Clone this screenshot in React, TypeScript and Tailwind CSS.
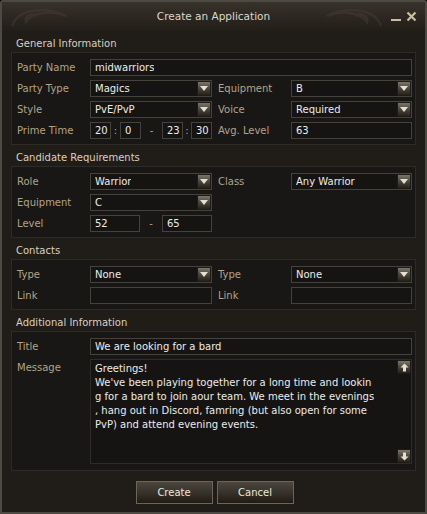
/**
 * Create an Application window
 * Game-style party recruitment form
 */

import type { ReactNode } from 'react';

const FONT = { fontFamily: '"DejaVu Sans", Verdana, sans-serif' };

function Label({ children, className = '' }: { children: ReactNode; className?: string }) {
  return (
    <div className={`flex h-[17px] items-center text-[10px] text-[#b3a386] ${className}`}>
      {children}
    </div>
  );
}

function Field({
  value = '',
  dropdown = false,
  className = '',
}: {
  value?: string;
  dropdown?: boolean;
  className?: string;
}) {
  return (
    <div
      className={`relative flex h-[17px] items-center border border-[#45423c] bg-[#151413] pl-[4px] text-[10px] text-[#ececea] ${className}`}
    >
      <span className="truncate">{value}</span>
      {dropdown && (
        <div className="absolute right-[0px] top-[0px] flex h-[15px] w-[14px] items-center justify-center border border-[#1e1b16] bg-gradient-to-b from-[#7a766c] via-[#4a463d] to-[#262219]">
          <svg width="8" height="5" viewBox="0 0 8 5">
            <path d="M0 0 H8 L4 5 Z" fill="#e4dfd2" />
          </svg>
        </div>
      )}
    </div>
  );
}

function ScrollButton({ up }: { up: boolean }) {
  return (
    <div className="flex h-[14px] w-[14px] items-center justify-center border border-[#1e1b16] bg-gradient-to-b from-[#7a766c] via-[#4a463d] to-[#262219]">
      <svg width="9" height="9" viewBox="0 0 9 9" className={up ? '' : 'rotate-180'}>
        <path d="M4.5 0.5 L8.5 4.5 H6 V8.5 H3 V4.5 H0.5 Z" fill="#e4dfd2" />
      </svg>
    </div>
  );
}

function Section({ title, children }: { title: string; children: ReactNode }) {
  return (
    <div>
      <div className="flex h-[21px] items-center pl-[5px] pt-[3px] text-[10px] text-[#d8d1c2]">
        {title}
      </div>
      <div className="border border-[#2e2b26] bg-[#181716] pb-[5px] pl-[5px] pr-[6px] pt-[6px]">
        {children}
      </div>
    </div>
  );
}

// grid: label col 73px, field 122px, gap, label 73, field 121
const row = 'grid grid-cols-[73px_122px_6px_73px_121px]';

const messageLines = [
  'Greetings!',
  "We've been playing together for a long time and lookin",
  'g for a bard to join aour team. We meet in the evenings',
  ', hang out in Discord, famring (but also open for some',
  'PvP) and attend evening events.',
];

export default function App() {
  return (
    <div className="h-[514px] w-[427px] bg-black" style={FONT}>
      <div className="relative flex h-full w-full flex-col rounded-t-[3px] border-2 border-[#4d4a44] bg-[#201c17]">
        {/* Title bar */}
        <div className="relative flex h-[29px] items-center justify-center bg-gradient-to-b from-[#37322a] to-[#221e18] text-[10.5px] text-[#dcd7cc]">
          <svg className="absolute left-[6px] top-[2px]" width="90" height="26" viewBox="0 0 90 26">
            <path
              d="M4 22 C10 4 40 2 58 12 C44 6 24 8 18 18 C16 12 24 8 30 12"
              fill="none"
              stroke="#463f35"
              strokeWidth="2.5"
              opacity="0.45"
            />
          </svg>
          <svg className="absolute right-[40px] top-[2px]" width="90" height="26" viewBox="0 0 90 26">
            <path
              d="M86 22 C80 4 50 2 32 12 C46 6 66 8 72 18 C74 12 66 8 60 12"
              fill="none"
              stroke="#463f35"
              strokeWidth="2.5"
              opacity="0.45"
            />
          </svg>
          <span className="relative">Create an Application</span>
          <div className="absolute right-[8px] top-[9px] flex items-end gap-[5px]">
            <div className="mb-[1px] h-[2px] w-[10px] bg-[#c9bea4]" />
            <svg width="11" height="11" viewBox="0 0 11 11">
              <path d="M1.5 1.5 L9.5 9.5 M9.5 1.5 L1.5 9.5" stroke="#c9bea4" strokeWidth="2.2" />
            </svg>
          </div>
        </div>

        {/* Content */}
        <div className="flex flex-col px-[9px]">
          <Section title="General Information">
            <div className="flex flex-col gap-[4px]">
              <div className="grid grid-cols-[73px_322px]">
                <Label>Party Name</Label>
                <Field value="midwarriors" />
              </div>
              <div className={row}>
                <Label>Party Type</Label>
                <Field value="Magics" dropdown />
                <div />
                <Label>Equipment</Label>
                <Field value="B" dropdown />
              </div>
              <div className={row}>
                <Label>Style</Label>
                <Field value="PvE/PvP" dropdown />
                <div />
                <Label>Voice</Label>
                <Field value="Required" dropdown />
              </div>
              <div className={row}>
                <Label>Prime Time</Label>
                <div className="flex items-center text-[10px] text-[#b3a386]">
                  <Field value="20" className="w-[21px] pl-[3px]" />
                  <span className="w-[9px] text-center">:</span>
                  <Field value="0" className="w-[21px] pl-[3px]" />
                  <span className="w-[21px] text-center">-</span>
                  <Field value="23" className="w-[21px] pl-[3px]" />
                  <span className="w-[8px] text-center">:</span>
                  <Field value="30" className="w-[21px] pl-[3px]" />
                </div>
                <div />
                <Label>Avg. Level</Label>
                <Field value="63" />
              </div>
            </div>
          </Section>

          <Section title="Candidate Requirements">
            <div className="flex flex-col gap-[4px]">
              <div className={row}>
                <Label>Role</Label>
                <Field value="Warrior" dropdown />
                <div />
                <Label>Class</Label>
                <Field value="Any Warrior" dropdown />
              </div>
              <div className={row}>
                <Label>Equipment</Label>
                <Field value="C" dropdown />
              </div>
              <div className={row}>
                <Label>Level</Label>
                <div className="flex items-center text-[10px] text-[#b3a386]">
                  <Field value="52" className="w-[50px]" />
                  <span className="w-[22px] text-center">-</span>
                  <Field value="65" className="w-[50px]" />
                </div>
              </div>
            </div>
          </Section>

          <Section title="Contacts">
            <div className="flex flex-col gap-[4px]">
              <div className={row}>
                <Label>Type</Label>
                <Field value="None" dropdown />
                <div />
                <Label>Type</Label>
                <Field value="None" dropdown />
              </div>
              <div className={row}>
                <Label>Link</Label>
                <Field />
                <div />
                <Label>Link</Label>
                <Field />
              </div>
            </div>
          </Section>

          <Section title="Additional Information">
            <div className="flex flex-col gap-[4px] pb-[1px]">
              <div className="grid grid-cols-[73px_322px]">
                <Label>Title</Label>
                <Field value="We are looking for a bard" />
              </div>
              <div className="grid grid-cols-[73px_322px]">
                <Label>Message</Label>
                <div className="relative h-[105px] border border-[#2f2c28] bg-[#151413] pl-[4px] pt-[2px] text-[10px] leading-[14px] text-[#ececea]">
                  {messageLines.map((line, i) => (
                    <div key={i} className="whitespace-pre">
                      {line}
                    </div>
                  ))}
                  <div className="absolute right-[0px] top-[0px]">
                    <ScrollButton up />
                  </div>
                  <div className="absolute bottom-[0px] right-[0px]">
                    <ScrollButton up={false} />
                  </div>
                </div>
              </div>
            </div>
          </Section>

          {/* Action Buttons */}
          <div className="mt-[10px] flex justify-center gap-[4px] pl-[2px]">
            <button className="h-[23px] w-[77px] border border-[#6b6657] bg-gradient-to-b from-[#4b473d] via-[#37332b] to-[#201c15] text-[10px] text-[#ece8de]">
              Create
            </button>
            <button className="h-[23px] w-[77px] border border-[#6b6657] bg-gradient-to-b from-[#4b473d] via-[#37332b] to-[#201c15] text-[10px] text-[#ece8de]">
              Cancel
            </button>
          </div>
        </div>
      </div>
    </div>
  );
}
